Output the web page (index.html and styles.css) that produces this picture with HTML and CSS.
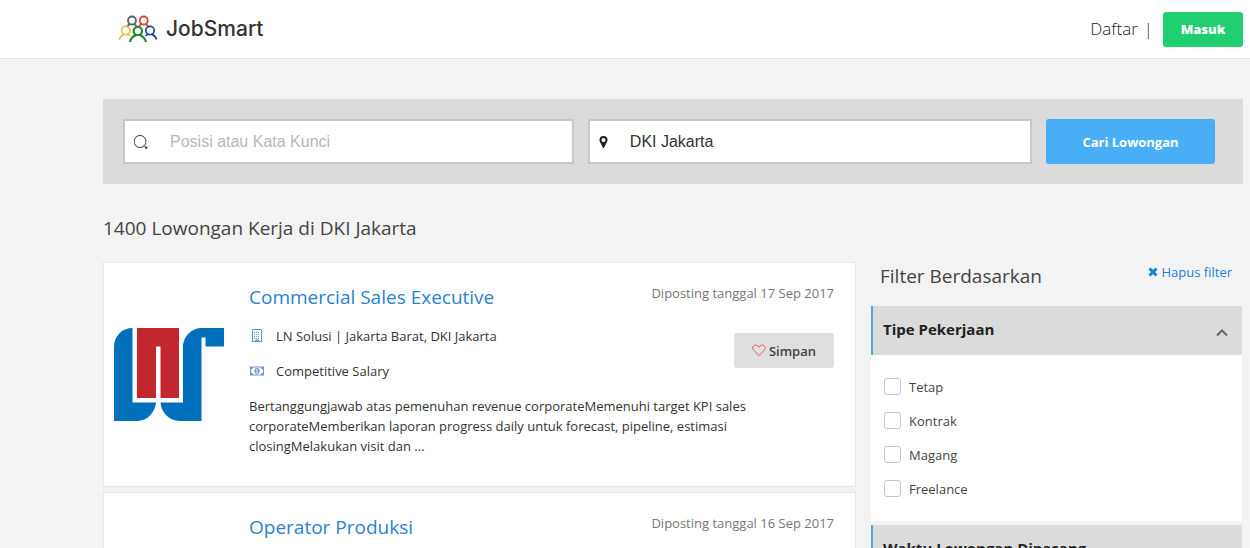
FILE: index.html
```html
<!DOCTYPE html>
<html lang="id">
<head>
    <meta charset="UTF-8">
    <meta name="viewport" content="width=device-width, initial-scale=1.0">
    <title>JobSmart</title>
    <link rel="stylesheet" href="styles.css">
</head>
<body>
    <header class="header">
        <a href="#" class="logo">
            <svg class="logo-icon" width="40" height="28" viewBox="0 0 40 28" fill="none" stroke-width="1.8">
                <g stroke="#5a5d60"><circle cx="14" cy="5.500" r="4"/><path d="M9 12q1-2 3-2.800M16 9.200q1.500.8 2.500 2"/></g>
                <g stroke="#dc4433"><circle cx="25.800" cy="5.500" r="4"/><path d="M21 11.500q1-1.700 3-2.300M27.500 9.200q2.200.8 3 2.800"/></g>
                <g stroke="#e3c34d"><circle cx="7.800" cy="15.500" r="4.200"/><path d="M1.200 24.500q1.500-4 5-5.200M9.500 19.300q1.500.5 2.500 1.500"/></g>
                <g stroke="#2546a0"><circle cx="32" cy="15.500" r="4.200"/><path d="M27.500 20.800q1-1 2.700-1.500M33.700 19.300q3.500 1.200 5 5.200"/></g>
                <g stroke="#1f8a2c" stroke-width="2.200"><circle cx="19.800" cy="16" r="4.200"/><path d="M11.800 27q1.500-5.500 6.500-7M21.500 20q5 1.500 6.500 7"/></g>
            </svg>
            <span>JobSmart</span>
        </a>
        <nav class="nav">
            <a href="#" class="nav-link">Daftar</a>
            <span>|</span>
            <button type="button" class="btn btn-login">Masuk</button>
        </nav>
    </header>

    <main class="container">
        <form class="search">
            <label class="field">
                <svg width="16" height="16" viewBox="0 0 16 16" fill="none" stroke="#333"><circle cx="6" cy="7.500" r="6"/><path d="M10 11.500l1.500 1.500"/><path d="M11.500 13l1.500 1.500" stroke-width="2"/></svg>
                <input type="text" placeholder="Posisi atau Kata Kunci" aria-label="Posisi atau Kata Kunci">
            </label>
            <label class="field field-location">
                <svg width="10" height="14" viewBox="0 0 10 14" fill="#222"><path fill-rule="evenodd" d="M4.500 1a4 4 0 0 0-4 4c0 1.200.5 2 1 3l2.300 4.600q.7 1 1.400 0L7.500 8c.5-1 1-1.800 1-3a4 4 0 0 0-4-4zM4.500 3a2 2 0 1 1 0 4 2 2 0 0 1 0-4z"/></svg>
                <input type="text" value="DKI Jakarta" aria-label="Lokasi">
            </label>
            <button type="submit" class="btn btn-search">Cari Lowongan</button>
        </form>

        <h1 class="result-title">1400 Lowongan Kerja di DKI Jakarta</h1>

        <div class="content">
            <section class="jobs">
                <article class="job">
                    <div class="job-logo">
                        <svg width="110" height="93" viewBox="0 0 110 93">
                            <path fill="#0070bd" d="M18.500 0v74.500H42C41 84 34 93 23 93H0V19C0 8 8 0 18.500 0z"/>
                            <path fill="#c1272d" d="M23 0h42v70H46.500V18.500H42V70H23z"/>
                            <path fill="#0070bd" d="M110 0v18.500H91.500V9.500h-4V93H66C55 93 47 84 46.500 74.500H69V19C69 8 78 0 88 0z"/>
                        </svg>
                    </div>
                    <div class="job-body">
                        <h2 class="job-title"><a href="#">Commercial Sales Executive</a></h2>
                        <p class="job-info">
                            <svg width="16" height="16" viewBox="0 0 16 16" fill="none" stroke="#6996cf"><path d="M3.500 1.500h9v12h-9zM2.500 13.500h11"/><path d="M5 4.500h6M5 6.500h6M5 8.500h6M5 10.500h6" stroke-dasharray="1 1"/><path d="M6.500 12h3v1.500h-3z" fill="#6996cf"/></svg>
                            LN Solusi | Jakarta Barat, DKI Jakarta
                        </p>
                        <p class="job-info">
                            <svg width="16" height="16" viewBox="0 0 16 16"><path fill="#6996cf" fill-rule="evenodd" d="M1 3.500h14v9H1zM4 4.500q0 1.500-2 2v3q2 .5 2 2h8q0-1.500 2-2v-3q-2-.5-2-2z"/><ellipse cx="8" cy="8" rx="2.500" ry="3" fill="#6996cf"/><path d="M7 7l1-.8v3.500M7 9.700h2" fill="none" stroke="#fff" stroke-width=".8"/></svg>
                            Competitive Salary
                        </p>
                        <p class="job-text">Bertanggungjawab atas pemenuhan revenue corporateMemenuhi target KPI sales corporateMemberikan laporan progress daily untuk forecast, pipeline, estimasi closingMelakukan visit dan ...</p>
                    </div>
                    <div class="job-side">
                        <span class="job-date">Diposting tanggal 17 Sep 2017</span>
                        <button type="button" class="btn btn-save">
                            <svg width="14" height="13" viewBox="0 0 14 13" fill="none" stroke="#ee5a5a"><path d="M7 11.500L1.800 6.300C.5 4.800.3 3 1.500 1.900 3 .5 5.500.8 7 3.200 8.500.8 11 .5 12.500 1.900c1.200 1.100 1 2.900-.3 4.400z"/></svg>
                            Simpan
                        </button>
                    </div>
                </article>

                <article class="job">
                    <div class="job-logo"></div>
                    <div class="job-body">
                        <h2 class="job-title"><a href="#">Operator Produksi</a></h2>
                    </div>
                    <div class="job-side">
                        <span class="job-date">Diposting tanggal 16 Sep 2017</span>
                    </div>
                </article>
            </section>

            <aside class="filter">
                <div class="filter-head">
                    <h2>Filter Berdasarkan</h2>
                    <a href="#" class="filter-clear">
                        <svg width="10" height="10" viewBox="0 0 10 10" stroke="#1583d6" stroke-width="3"><path d="M1.500 1.500l7 7M8.500 1.500l-7 7"/></svg>
                        Hapus filter
                    </a>
                </div>
                <div class="filter-box">
                    <h3 class="filter-title">
                        Tipe Pekerjaan
                        <svg width="12" height="16" viewBox="0 0 12 16" fill="none" stroke="#666" stroke-width="2"><path d="M1 14.500l5-5 5 5"/></svg>
                    </h3>
                    <div class="filter-list">
                        <label><input type="checkbox">Tetap</label>
                        <label><input type="checkbox">Kontrak</label>
                        <label><input type="checkbox">Magang</label>
                        <label><input type="checkbox">Freelance</label>
                    </div>
                </div>
                <div class="filter-box">
                    <h3 class="filter-title">Waktu Lowongan Dipasang</h3>
                </div>
            </aside>
        </div>
    </main>
</body>
</html>
```

FILE: styles.css
```css
/* ======= General ======= */
* {
    box-sizing: border-box;
}

body {
    font-family: "Open Sans", sans-serif;
    font-size: 13px;
    line-height: 20px;
    margin: 0;
    background: #f3f3f3;
    color: #333;
}

h1, h2, h3, p {
    margin: 0;
    font-weight: 400;
}

a {
    color: #2a83cf;
    text-decoration: none;
}

svg {
    flex-shrink: 0;
}

.btn {
    border: none;
    border-radius: 3px;
    font-family: inherit;
    font-size: 13px;
    font-weight: 700;
    color: #fff;
    cursor: pointer;
}

/* ======= Header ======= */
.header {
    display: flex;
    align-items: center;
    justify-content: space-between;
    height: 59px;
    padding: 0 7px 0 118px;
    background: #fff;
    border-bottom: 1px solid #e3e5e9;
}

.logo {
    display: flex;
    align-items: center;
    gap: 8px;
    font-family: Inter, sans-serif;
    font-size: 21px;
    font-weight: 500;
    color: #333;
}

.nav {
    display: flex;
    align-items: center;
    gap: 6px;
    font-size: 17px;
    font-weight: 300;
}

.nav-link {
    color: #222;
}

.btn-login {
    width: 80px;
    height: 35px;
    padding: 0;
    margin-left: 4px;
    background: #20cf70;
    font-weight: 800;
}

/* ======= Search ======= */
.container {
    padding: 40px 7px 0 103px;
}

.search {
    display: flex;
    gap: 14px;
    padding: 20px 28px 20px 20px;
    background: #dbdbdb;
}

.field {
    display: flex;
    flex: 451;
    align-items: center;
    gap: 20px;
    height: 45px;
    padding: 0 9px;
    background: #fff;
    border: 2px solid #c8c8c8;
}

.field-location {
    flex: 444;
    gap: 21px;
}

.field input {
    flex: 1;
    min-width: 0;
    padding: 0;
    border: none;
    outline: none;
    font-family: "Liberation Sans", Arial, sans-serif;
    font-size: 16px;
    color: #333;
}

.field input::placeholder {
    color: #b8b8b8;
}

.btn-search {
    width: 169px;
    height: 45px;
    background: #48aff7;
}

.result-title {
    margin: 32px 0 22px;
    font-size: 19px;
    line-height: 24px;
    color: #444;
}

/* ======= Job list ======= */
.content {
    display: flex;
    align-items: flex-start;
    gap: 15px;
}

.jobs {
    flex: 1;
}

.job {
    display: grid;
    grid-template-columns: 110px 1fr auto;
    column-gap: 25px;
    min-height: 225px;
    margin-bottom: 5px;
    padding: 20px 21px 20px 10px;
    background: #fff;
    border: 1px solid #e8e8e8;
}

.job-logo {
    grid-row: 1;
    align-self: center;
    display: flex;
}

.job-body {
    grid-column: 2 / 4;
    grid-row: 1;
    padding-right: 70px;
}

.job-title {
    margin-bottom: 15px;
    font-size: 19px;
    line-height: 28px;
}

.job-info {
    display: flex;
    align-items: center;
    gap: 11px;
    height: 20px;
    margin-bottom: 15px;
}

.job-side {
    grid-column: 3;
    grid-row: 1;
    display: flex;
    flex-direction: column;
    align-items: flex-end;
    gap: 30px;
}

.job-date {
    color: #777;
}

.btn-save {
    display: flex;
    align-items: center;
    gap: 3px;
    height: 35px;
    padding: 0 18px;
    background: #dfdfdf;
    color: #444;
    font-weight: 600;
}

/* ======= Filter ======= */
.filter {
    width: 372px;
    padding-right: 1px;
}

.filter-head {
    display: flex;
    justify-content: space-between;
    padding: 0 10px 16px 9px;
}

.filter-head h2 {
    font-size: 19px;
    line-height: 28px;
    color: #444;
}

.filter-clear {
    display: flex;
    align-items: center;
    gap: 4px;
    height: 20px;
    color: #1583d6;
}

.filter-box {
    margin-bottom: 4px;
    background: #fff;
}

.filter-title {
    display: flex;
    align-items: center;
    justify-content: space-between;
    height: 49px;
    padding: 0 14px 3px 10px;
    background: #dbdbdb;
    border-left: 2px solid #5aa5d8;
    font-size: 15px;
    font-weight: 700;
    color: #222;
}

.filter-list {
    padding: 23px 13px 24px;
}

.filter-list label {
    display: flex;
    align-items: center;
    gap: 8px;
    height: 17px;
    margin-bottom: 17px;
    color: #444;
}

.filter-list input {
    appearance: none;
    width: 17px;
    height: 17px;
    margin: 0;
    background: #fff;
    border: 1px solid #c5c5c5;
    border-radius: 3px;
}

.filter-list label:last-child {
    margin-bottom: 0;
}

@media (max-width: 900px) {
    .header,
    .container {
        padding-left: 15px;
        padding-right: 15px;
    }

    .search,
    .content {
        flex-direction: column;
    }

    .field,
    .btn-search {
        flex: none;
        width: 100%;
    }

    .jobs,
    .filter {
        width: 100%;
    }
}
```
